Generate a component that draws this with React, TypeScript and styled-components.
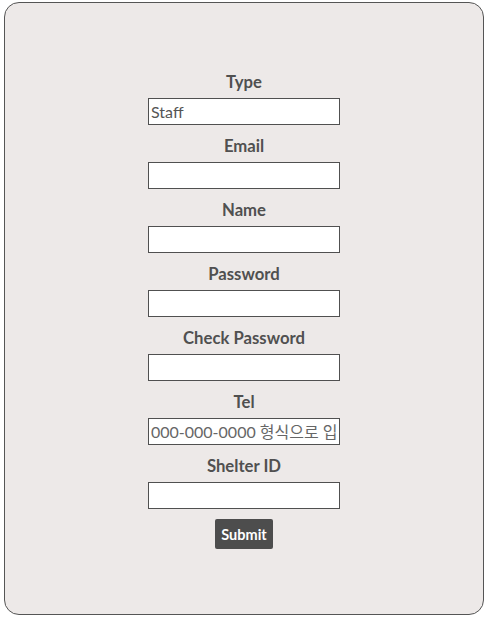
import React from "react";
import styled, { createGlobalStyle } from "styled-components";

const Global = createGlobalStyle`
  html, body { margin: 0; padding: 0; background: #ffffff; }
  body { font-family: "Lato", "Noto Sans CJK KR", sans-serif; }
  * { box-sizing: border-box; }
`;

const Page = styled.div`
  padding: 2px 3px 2px 4px;
  width: 487px;
  height: 617px;
`;

const Card = styled.form`
  height: 613px;
  width: 480px;
  border: 1px solid #555;
  border-radius: 15px;
  background: #ede9e8;
  display: flex;
  flex-direction: column;
  align-items: center;
  justify-content: flex-start;
  padding-top: 58px;
`;

const Field = styled.div`
  display: flex;
  flex-direction: column;
  align-items: center;
`;

const Label = styled.label`
  font-family: "Lato", sans-serif;
  font-weight: 700;
  font-size: 16.7px;
  line-height: 24px;
  color: #505050;
  margin: 9px 0 4px;
`;

const Input = styled.input`
  width: 192px;
  height: 27px;
  border: 1px solid #505050;
  background: #fff;
  padding: 0 2px;
  font-family: "Lato", "Noto Sans CJK KR", sans-serif;
  font-size: 16px;
  color: #555;
  outline: none;
  &::placeholder { color: #666; }
`;

const Button = styled.button`
  margin-top: 10px;
  width: 58px;
  height: 30px;
  background: #4d4d4d;
  color: #fff;
  border: none;
  border-radius: 2px;
  font-family: "Lato", sans-serif;
  font-weight: 700;
  font-size: 14.5px;
`;

const fields = [
  { label: "Type", value: "Staff" },
  { label: "Email" },
  { label: "Name" },
  { label: "Password" },
  { label: "Check Password" },
  { label: "Tel", placeholder: "000-000-0000 형식으로 입력" },
  { label: "Shelter ID" },
];

export default function App() {
  return (
    <>
      <Global />
      <Page>
        <Card onSubmit={(e) => e.preventDefault()}>
          {fields.map((f) => (
            <Field key={f.label}>
              <Label>{f.label}</Label>
              <Input defaultValue={f.value} placeholder={f.placeholder} />
            </Field>
          ))}
          <Button type="submit">Submit</Button>
        </Card>
      </Page>
    </>
  );
}
